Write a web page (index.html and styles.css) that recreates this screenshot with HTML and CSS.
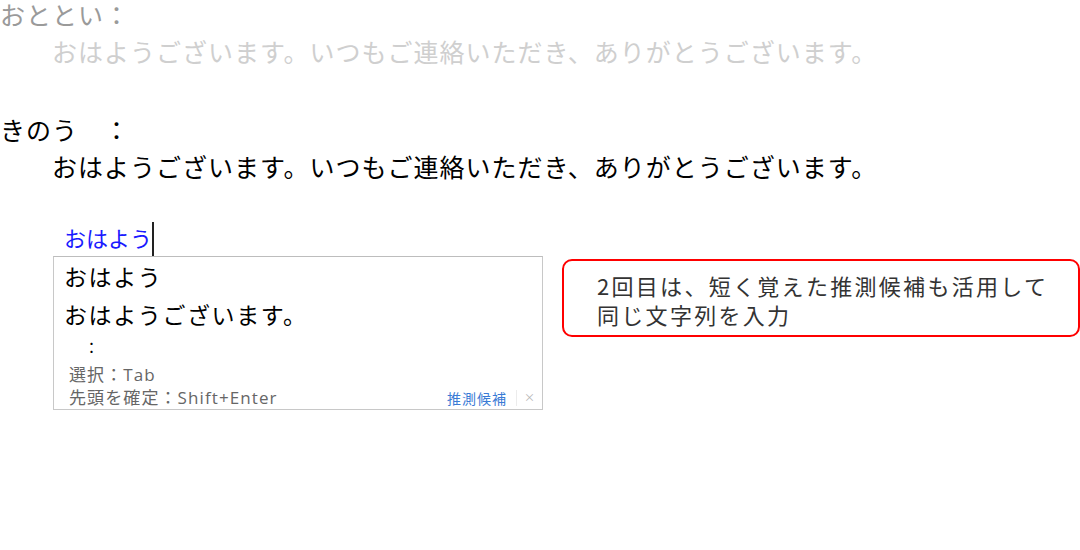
FILE: index.html
```html
<!DOCTYPE html>
<html lang="ja">
<head>
    <meta charset="UTF-8">
    <title>推測候補</title>
    <link rel="stylesheet" href="styles.css">
</head>
<body>
<div class="page">
    <div class="log old">
        <div class="who">おととい：</div>
        <div class="msg">おはようございます。いつもご連絡いただき、ありがとうございます。</div>
    </div>
    <div class="log">
        <div class="who">きのう　：</div>
        <div class="msg">おはようございます。いつもご連絡いただき、ありがとうございます。</div>
    </div>

    <div class="input"><span class="typed">おはよう</span><span class="caret"></span></div>

    <div class="row">
        <div class="popup">
            <div class="cand">おはよう</div>
            <div class="cand">おはようございます。</div>
            <div class="more">：</div>
            <div class="help">選択：Tab</div>
            <div class="help last">
                <span>先頭を確定：Shift+Enter</span>
                <span class="tools"><span class="link">推測候補</span><span class="close">×</span></span>
            </div>
        </div><!--候補-->
        <div class="note">2回目は、短く覚えた推測候補も活用して<br>同じ文字列を入力</div>
    </div>
</div>
</body>
</html>
```

FILE: styles.css
```css
body {
    margin: 0;
    background: #fff;
    font-family: "Noto Sans CJK JP", "Noto Sans", sans-serif;
    color: #000;
}

.page {
    width: 1080px;
    height: 550px;
    overflow: hidden;
}

.log {
    font-size: 25px;
    line-height: 37px;
    letter-spacing: 1px;
    margin-top: 41px;
}

.log.old {
    margin-top: -4px;
}

.log.old .who {
    color: #9a9a9a;
}

.log.old .msg {
    color: #cfcfcf;
}

.msg {
    padding-left: 52px;
}

.input {
    margin-top: 33px;
    padding-left: 64px;
    height: 38px;
    display: flex;
    align-items: center;
    font-size: 22px;
}

.typed {
    color: #1a1aff;
}

.caret {
    width: 2px;
    height: 34px;
    background: #222;
    margin-top: 4px;
}

.row {
    display: flex;
    align-items: flex-start;
}

.popup {
    margin-left: 53px;
    width: 488px;
    border: 1px solid #c8c8c8;
    border-top-color: #bdbdbd;
}

.cand {
    font-size: 23px;
    letter-spacing: 1.6px;
    line-height: 38px;
    padding-left: 10px;
}

.more {
    font-size: 15px;
    line-height: 28px;
    padding-left: 30px;
}

.help {
    font-family: "Open Sans", "Noto Sans CJK JP", sans-serif;
    font-size: 17px;
    letter-spacing: 1.1px;
    line-height: 23px;
    color: #666;
    padding-left: 15px;
}

.more + .help {
    margin-top: 2px;
}

.help.last {
    display: flex;
    justify-content: space-between;
}

.tools {
    display: flex;
    align-items: center;
    font-family: "Noto Sans CJK JP", sans-serif;
    font-size: 14px;
    letter-spacing: 0;
}

.link {
    color: #3a7bd5;
    letter-spacing: 1px;
    padding-right: 9px;
    border-right: 1px solid #ececec;
    line-height: 16px;
}

.close {
    color: #b5b5b5;
    font-size: 11px;
    width: 25px;
    text-align: center;
}

.note {
    margin-left: 19px;
    margin-top: 3px;
    width: 481px;
    height: 64px;
    padding: 10px 0 0 33px;
    border: 2px solid #f00;
    border-radius: 10px;
    font-size: 22px;
    line-height: 29px;
    letter-spacing: 2.3px;
    color: #333;
}
```
